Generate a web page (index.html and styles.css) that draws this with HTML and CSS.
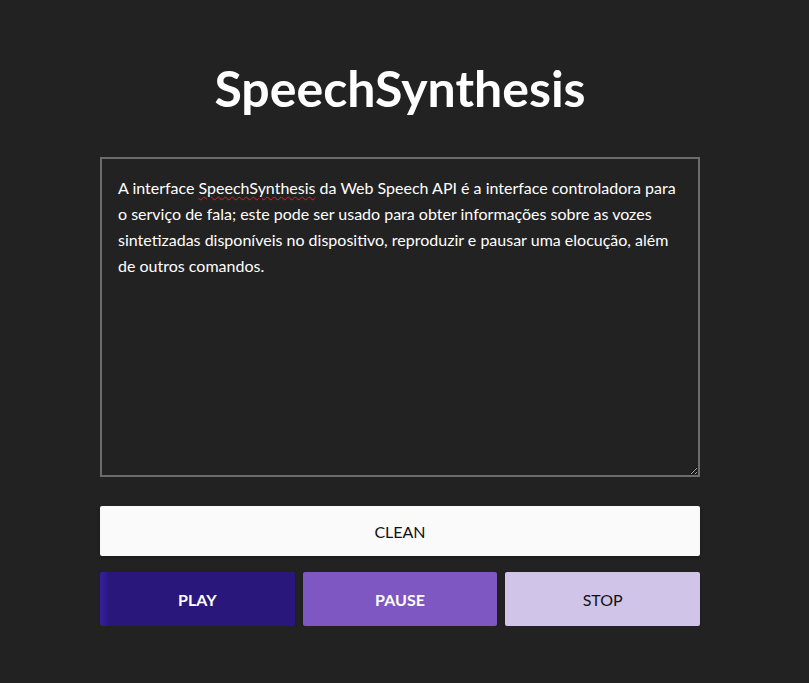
FILE: index.html
```html
<!DOCTYPE html>
<html lang="pt-BR">
<head>
<meta charset="utf-8">
<title>SpeechSynthesis</title>
<link rel="stylesheet" href="styles.css">
</head>
<body>
<main class="app">
  <h1 class="title">SpeechSynthesis</h1>
  <div class="editor" contenteditable="true" spellcheck="false">A interface <span class="misspelled">SpeechSynthesis</span> da Web Speech API é a interface controladora para o serviço de fala; este pode ser usado para obter informações sobre as vozes sintetizadas disponíveis no dispositivo, reproduzir e pausar uma elocução, além de outros comandos.</div>
  <button class="btn btn-clean" type="button">CLEAN</button>
  <div class="controls">
    <button class="btn btn-play" type="button">PLAY</button>
    <button class="btn btn-pause" type="button">PAUSE</button>
    <button class="btn btn-stop" type="button">STOP</button>
  </div>
</main>
</body>
</html>
```
FILE: styles.css
```css
html, body {
  margin: 0;
  padding: 0;
  background: #222222;
}

body {
  font-family: "Segoe UI", "Lato", "Open Sans", sans-serif;
  color: #ffffff;
  padding-right: 9px;
}

.app {
  width: 600px;
  margin: 0 auto;
  padding-top: 56px;
  display: flex;
  flex-direction: column;
}

.title {
  margin: 0 0 37px;
  font-size: 50px;
  line-height: 64px;
  font-weight: 700;
  text-align: center;
  color: #ffffff;
}

.editor {
  box-sizing: border-box;
  width: 600px;
  height: 320px;
  border: 2px solid #6b6b6b;
  padding: 16px 16px;
  font-size: 16px;
  line-height: 26px;
  color: #ffffff;
  background: #222222;
  overflow: auto;
  resize: vertical;
  outline: none;
}

.misspelled {
  text-decoration: underline wavy #e02020;
  text-decoration-thickness: 1px;
  text-underline-offset: 2px;
}

.btn {
  font-family: inherit;
  font-size: 16px;
  border: none;
  border-radius: 2px;
  cursor: pointer;
  box-shadow: 0 2px 3px rgba(0, 0, 0, 0.25);
}

.btn-clean {
  margin-top: 29px;
  height: 50px;
  background: #fafafa;
  color: #111111;
}

.controls {
  margin-top: 16px;
  display: grid;
  grid-template-columns: repeat(3, 1fr);
  gap: 8px;
}

.controls .btn {
  height: 54px;
}

.btn-play {
  background: linear-gradient(90deg, #34209a 0, #2f1c8e 5px, #29177b 9px, #29177b 100%);
  color: #ffffff;
  font-weight: 700;
}

.btn-pause {
  background: #7e57c2;
  color: #ffffff;
  font-weight: 700;
}

.btn-stop {
  background: #d1c4e9;
  color: #111111;
}
```
